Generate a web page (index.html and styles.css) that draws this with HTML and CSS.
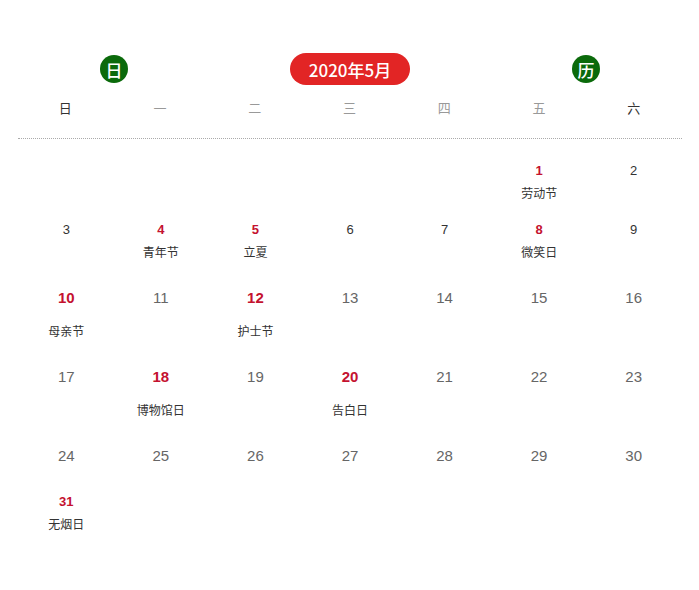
FILE: index.html
```html
<!DOCTYPE html>
<html lang="zh">
<head>
  <meta charset="UTF-8" />
  <title>2020年5月 日历</title>
  <link rel="stylesheet" href="styles.css">
</head>
<body>
  <div class="calendar">
    <div class="cal-header">
      <span class="badge">日</span>
      <span class="month-pill">2020年5月</span>
      <span class="badge">历</span>
    </div>
    <div class="weekdays">
      <span class="wd-end">日</span>
      <span>一</span>
      <span>二</span>
      <span>三</span>
      <span>四</span>
      <span>五</span>
      <span class="wd-end">六</span>
    </div>
    <div class="weeks">
      <div class="week small h59">
        <div class="day"></div>
        <div class="day"></div>
        <div class="day"></div>
        <div class="day"></div>
        <div class="day"></div>
        <div class="day"><span class="num hol">1</span><span class="tag">劳动节</span></div>
        <div class="day"><span class="num">2</span></div>
      </div>
      <div class="week small h67">
        <div class="day"><span class="num">3</span></div>
        <div class="day"><span class="num hol">4</span><span class="tag">青年节</span></div>
        <div class="day"><span class="num hol">5</span><span class="tag">立夏</span></div>
        <div class="day"><span class="num">6</span></div>
        <div class="day"><span class="num">7</span></div>
        <div class="day"><span class="num hol">8</span><span class="tag">微笑日</span></div>
        <div class="day"><span class="num">9</span></div>
      </div>
      <div class="week big h79">
        <div class="day"><span class="num hol">10</span><span class="tag">母亲节</span></div>
        <div class="day"><span class="num">11</span></div>
        <div class="day"><span class="num hol">12</span><span class="tag">护士节</span></div>
        <div class="day"><span class="num">13</span></div>
        <div class="day"><span class="num">14</span></div>
        <div class="day"><span class="num">15</span></div>
        <div class="day"><span class="num">16</span></div>
      </div>
      <div class="week big h79">
        <div class="day"><span class="num">17</span></div>
        <div class="day"><span class="num hol">18</span><span class="tag">博物馆日</span></div>
        <div class="day"><span class="num">19</span></div>
        <div class="day"><span class="num hol">20</span><span class="tag">告白日</span></div>
        <div class="day"><span class="num">21</span></div>
        <div class="day"><span class="num">22</span></div>
        <div class="day"><span class="num">23</span></div>
      </div>
      <div class="week big h47">
        <div class="day"><span class="num">24</span></div>
        <div class="day"><span class="num">25</span></div>
        <div class="day"><span class="num">26</span></div>
        <div class="day"><span class="num">27</span></div>
        <div class="day"><span class="num">28</span></div>
        <div class="day"><span class="num">29</span></div>
        <div class="day"><span class="num">30</span></div>
      </div>
      <div class="week small">
        <div class="day"><span class="num hol">31</span><span class="tag">无烟日</span></div>
        <div class="day"></div>
        <div class="day"></div>
        <div class="day"></div>
        <div class="day"></div>
        <div class="day"></div>
        <div class="day"></div>
      </div>
    </div>
  </div>
</body>
</html>
```

FILE: styles.css
```css
html, body {
  margin: 0;
  padding: 0;
  background: #fff;
  font-family: "Liberation Sans", "Noto Sans CJK SC", sans-serif;
  color: #333;
}
.calendar {
  padding: 53px 18px 0 19px;
}
.cal-header {
  display: flex;
  justify-content: space-between;
  align-items: center;
  padding: 0 81px 0 81px;
  height: 32px;
}
.badge {
  width: 28px;
  height: 28px;
  border-radius: 50%;
  background: #0b6a0b;
  color: #fff;
  font-size: 17px;
  font-family: "Noto Sans CJK SC", sans-serif;
  font-weight: 500;
  display: flex;
  align-items: center;
  justify-content: center;
}
.month-pill {
  width: 120px;
  height: 32px;
  border-radius: 16px;
  background: #e22525;
  color: #fff;
  font-size: 17px;
  font-family: "Noto Sans CJK SC", sans-serif;
  font-weight: 500;
  display: flex;
  align-items: center;
  justify-content: center;
}
.weekdays {
  display: grid;
  grid-template-columns: repeat(7, 1fr);
  margin: 14px -1px 0 -1px;
  padding: 0 1px 19px 0;
  border-bottom: 1px dotted #aaa;
  font-size: 13px;
  line-height: 20px;
  text-align: center;
  color: #999;
}
.weekdays .wd-end {
  color: #333;
}
.weeks {
  padding-top: 22px;
}
.week {
  display: grid;
  grid-template-columns: repeat(7, 1fr);
  text-align: center;
}
.h59 { height: 59px; }
.h67 { height: 67px; }
.h79 { height: 79px; }
.h47 { height: 47px; }
.day {
  display: flex;
  flex-direction: column;
  align-items: center;
}
.num {
  color: #333;
}
.tag {
  font-size: 12px;
  line-height: 18px;
  color: #333;
}
.small .num {
  font-size: 13px;
  line-height: 20px;
}
.small .tag {
  margin-top: 4px;
}
.big .num {
  font-size: 15px;
  line-height: 22px;
  color: #666;
}
.big .tag {
  margin-top: 14px;
}
.num.hol,
.big .num.hol {
  color: #c4122f;
  font-weight: bold;
}
```
